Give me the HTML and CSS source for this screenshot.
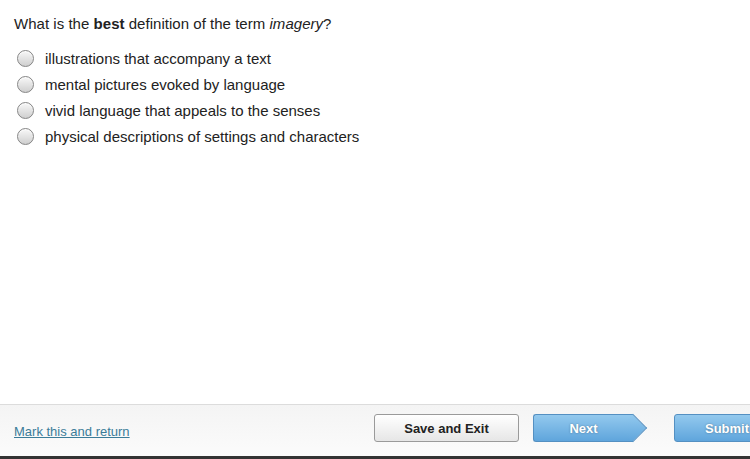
FILE: index.html
```html
<!DOCTYPE html>
<html>
<head>
<meta charset="utf-8">
<link rel="stylesheet" href="styles.css">
</head>
<body>
<div class="page">
  <main class="content">
    <p class="question">What is the <b>best</b> definition of the term <i>imagery</i>?</p>
    <ul class="options">
      <li class="option"><span class="radio"></span><span>illustrations that accompany a text</span></li>
      <li class="option"><span class="radio"></span><span>mental pictures evoked by language</span></li>
      <li class="option"><span class="radio"></span><span>vivid language that appeals to the senses</span></li>
      <li class="option"><span class="radio"></span><span>physical descriptions of settings and characters</span></li>
    </ul>
  </main>
  <footer class="footer">
    <a class="mark" href="#">Mark this and return</a>
    <div class="buttons">
      <button class="btn save">Save and Exit</button>
      <button class="btn next">Next</button>
      <button class="btn submit">Submit</button>
    </div>
  </footer>
  <div class="bottombar"></div>
</div>
</body>
</html>
```
FILE: styles.css
```css
html, body {
  margin: 0;
  padding: 0;
  background: #fff;
}
.page {
  width: 750px;
  height: 459px;
  display: flex;
  flex-direction: column;
  overflow: hidden;
  font-family: "Liberation Sans", Arial, sans-serif;
  color: #222;
}
.content {
  flex: 1;
  padding: 15px 14px 0 14px;
}
.question {
  margin: 0;
  font-size: 15px;
  line-height: 18px;
  letter-spacing: 0.03px;
}
.options {
  list-style: none;
  margin: 12px 0 0 0;
  padding: 0;
}
.option {
  display: flex;
  align-items: center;
  height: 26px;
  font-size: 15px;
  color: #222;
}
.radio {
  width: 17px;
  height: 17px;
  border: 1px solid #858585;
  border-radius: 50%;
  background: linear-gradient(#f8f8f8, #cfcfcf);
  box-shadow: inset 0 1px 1px rgba(255,255,255,0.9);
  margin: 0 11px 0 3px;
  flex: none;
  box-sizing: border-box;
}
.footer {
  height: 51px;
  border-top: 1px solid #dcdcdc;
  background: linear-gradient(#f4f4f4, #fbfbfb);
  display: flex;
  align-items: center;
  padding: 0 0 0 14px;
}
.mark {
  font-size: 13px;
  color: #3b7c99;
  text-decoration: underline;
  margin-top: 1px;
}
.buttons {
  margin-left: auto;
  margin-right: -30px;
  margin-bottom: 5px;
  display: flex;
  align-items: center;
  gap: 14px;
}
.btn {
  font-family: "Liberation Sans", Arial, sans-serif;
  font-weight: bold;
  font-size: 13px;
  height: 28px;
  padding: 0;
  border-radius: 3px;
  cursor: pointer;
}
.save {
  width: 145px;
  color: #222;
  border: 1px solid #9a9a9a;
  background: linear-gradient(#ffffff, #e6e6e6);
}
.next, .submit {
  color: #fff;
  text-shadow: 0 0 2px rgba(0,0,0,0.35);
  border: 1px solid #5490c2;
  background: linear-gradient(#93c9ee, #5fa5dc);
}
.next {
  position: relative;
  width: 100px;
  border-right: none;
  border-radius: 3px 0 0 3px;
  margin-right: 27px;
}
.next::after {
  content: "";
  position: absolute;
  top: 3px;
  right: -10px;
  width: 19px;
  height: 19px;
  border-top: 1px solid #5490c2;
  border-right: 1px solid #5490c2;
  background: linear-gradient(135deg, #93c9ee, #5fa5dc);
  transform: rotate(45deg);
}
.submit {
  width: 106px;
  text-align: left;
  padding-left: 30px;
}
.bottombar {
  height: 3px;
  background: #333;
}
```
